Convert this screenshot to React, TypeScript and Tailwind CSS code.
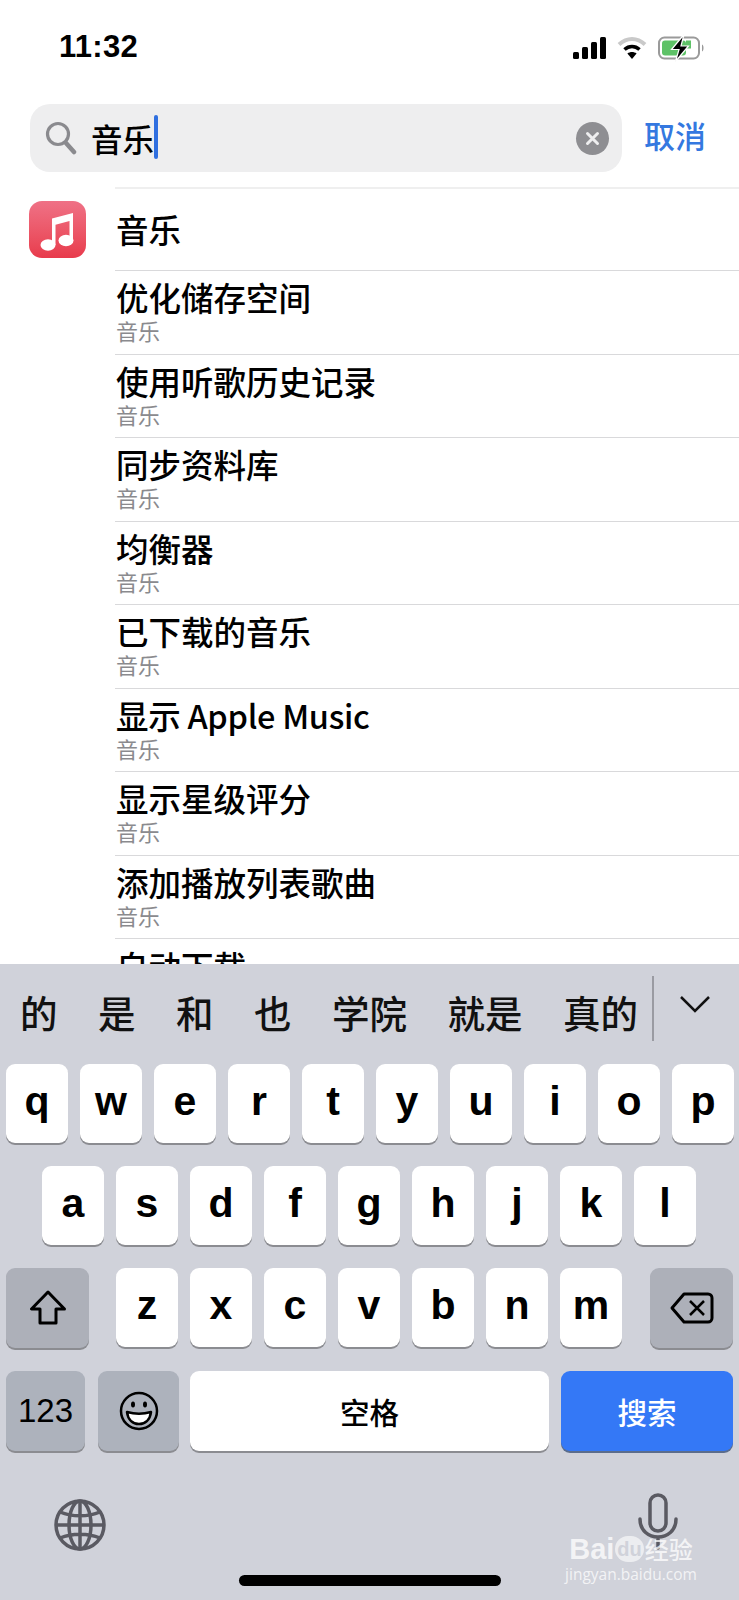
const cjk = "font-['Noto_Sans_CJK_SC','Noto_Sans',sans-serif]"

const rows = [
  "优化储存空间",
  "使用听歌历史记录",
  "同步资料库",
  "均衡器",
  "已下载的音乐",
  "显示 Apple Music",
  "显示星级评分",
  "添加播放列表歌曲",
]

const candidates = ["的", "是", "和", "也", "学院", "就是", "真的"]

function StatusBar() {
  return (
    <div className="flex h-[104px] items-start justify-between pl-[59px] pr-[34px] pt-[28px]">
      <span className="font-['Liberation_Sans',sans-serif] text-[31px] font-bold leading-[38px] tracking-[0.3px] text-black">11:32</span>
      <div className="mt-[6px] flex items-center gap-[11px]">
        <svg width="33" height="24" viewBox="0 0 33 24">
          <rect x="0" y="16" width="6" height="7" rx="1.5" fill="#000" />
          <rect x="9" y="11" width="6" height="12" rx="1.5" fill="#000" />
          <rect x="18" y="6" width="6" height="17" rx="1.5" fill="#000" />
          <rect x="27" y="1" width="6" height="22" rx="1.5" fill="#000" />
        </svg>
        <svg width="30" height="24" viewBox="0 0 30 24" fill="none">
          <path d="M2 8.500C10 1 20 1 28 8.500" stroke="#c9c9c9" strokeWidth="4" />
          <path d="M7.500 13.500C12 9.500 18 9.500 22.500 13.500" stroke="#000" strokeWidth="3.600" />
          <path d="M15 23l-4.600-5.400c2.700-2 6.500-2 9.200 0z" fill="#000" />
        </svg>
        <svg width="47" height="28" viewBox="0 0 47 28" fill="none">
          <rect x="1" y="3.500" width="40" height="21" rx="5.500" stroke="#9a9a9a" strokeWidth="2" />
          <rect x="4" y="6.500" width="24" height="15" rx="3" fill="#5ec267" />
          <rect x="28" y="6.500" width="5" height="8" fill="#5ec267" />
          <path d="M44 10.500c2 .6 2 6.400 0 7z" fill="#9a9a9a" />
          <path d="M26 0.500L13.500 15.500h7.500L17.500 27.500l13-15.500h-7.500z" fill="#000" stroke="#fff" strokeWidth="1.200" />
        </svg>
      </div>
    </div>
  )
}

function SearchBar() {
  return (
    <div className="flex items-center pl-[30px]">
      <div className="flex h-[68px] w-[592px] items-center rounded-[20px] bg-[#eeeeef] pl-[15px] pr-[13px]">
        <svg width="32" height="34" viewBox="0 0 32 34" fill="none">
          <circle cx="13" cy="13" r="10.500" stroke="#8a8a8e" strokeWidth="3.200" />
          <path d="M21 22l8 9" stroke="#8a8a8e" strokeWidth="4.500" strokeLinecap="round" />
        </svg>
        <span className={`${cjk} ml-[14px] text-[31.500px] font-medium leading-[44px] text-black`}>音乐</span>
        <span className="mb-[2px] h-[44px] w-[3.500px] rounded-full bg-[#2f6fe0]" />
        <span className="ml-auto flex h-[33px] w-[33px] items-center justify-center rounded-full bg-[#8e8e92]">
          <svg width="15" height="15" viewBox="0 0 15 15" fill="none">
            <path d="M2.500 2.500l10 10M12.500 2.500l-10 10" stroke="#eeeeef" strokeWidth="3" strokeLinecap="round" />
          </svg>
        </span>
      </div>
      <span className={`${cjk} mb-[6px] ml-[22px] text-[31px] font-medium leading-[44px] text-[#3478e0]`}>取消</span>
    </div>
  )
}

function MusicIcon() {
  return (
    <div className="flex h-[57px] w-[57px] items-center justify-center rounded-[13px] bg-gradient-to-b from-[#ef7186] to-[#e83a4c]">
      <svg width="36" height="42" viewBox="0 0 36 42" fill="#fff">
        <path d="M12 9.500L33 4v27h-3.500V12L15.500 15.700V36H12z" />
        <ellipse cx="8" cy="36" rx="7.500" ry="5.800" />
        <ellipse cx="26" cy="31.500" rx="7.500" ry="5.800" />
      </svg>
    </div>
  )
}

function ResultList() {
  return (
    <div className="mt-[15px] min-h-0 flex-1 overflow-hidden">
      <div className="ml-[115px] h-[2px] bg-[#efefef]" />
      <div className="relative h-[81px] pl-[116px]">
        <div className="absolute left-[29px] top-[12px]">
          <MusicIcon />
        </div>
        <p className={`${cjk} pt-[19px] text-[32.500px] font-medium leading-[42px] text-black`}>音乐</p>
      </div>
      {rows.map((title) => (
        <div key={title} className="ml-[115px] h-[83.500px] border-t border-[#d9d9db] pl-[1px]">
          <p className={`${cjk} whitespace-nowrap pt-[7px] text-[32.500px] font-medium leading-[38px] text-black ${title.includes("Apple") ? "tracking-[-0.3px]" : ""}`}>{title}</p>
          <p className={`${cjk} text-[22px] leading-[28px] text-[#8a8a8e]`}>音乐</p>
        </div>
      ))}
      <div className="ml-[115px] border-t border-[#d9d9db] pl-[1px]">
        <p className={`${cjk} whitespace-nowrap pt-[8px] text-[32.500px] font-medium leading-[38px] text-black`}>自动下载</p>
      </div>
    </div>
  )
}

function LetterKey({ label }: { label: string }) {
  return (
    <div className="flex h-[79px] w-[62px] items-center justify-center rounded-[9px] bg-white pb-[4px] font-['Liberation_Sans',sans-serif] text-[41px] font-bold text-black shadow-[0_2px_0_#8b8c91]">
      {label}
    </div>
  )
}

function Keyboard() {
  return (
    <div className="relative flex h-[636px] flex-col bg-[#d0d2da]">
      <div className="flex h-[100px] items-start pl-[20px]">
        <div className={`${cjk} flex w-[632px] gap-[40.500px] pt-[20px] text-[37.500px] font-medium leading-[56px] text-[#111]`}>
          {candidates.map((c) => (
            <span key={c}>{c}</span>
          ))}
        </div>
        <div className="mt-[12px] h-[65px] w-[2px] bg-[#9a9ba2]" />
        <svg className="ml-[25px] mt-[30px]" width="32" height="20" viewBox="0 0 32 20" fill="none">
          <path d="M2 3l14 14L30 3" stroke="#111" strokeWidth="2.500" />
        </svg>
      </div>

      <div className="flex flex-col gap-[23px]">
        <div className="flex gap-[12px] pl-[6px]">
          {"qwertyuiop".split("").map((k) => (
            <LetterKey key={k} label={k} />
          ))}
        </div>
        <div className="flex gap-[12px] pl-[42px]">
          {"asdfghjkl".split("").map((k) => (
            <LetterKey key={k} label={k} />
          ))}
        </div>
        <div className="flex pl-[6px]">
          <div className="flex h-[80px] w-[83px] items-center justify-center rounded-[9px] bg-[#adb0b9] shadow-[0_2px_0_#8b8c91]">
            <svg width="38" height="36" viewBox="0 0 38 36" fill="none">
              <path d="M19 2L2.500 19H11v14h16V19h8.500z" stroke="#000" strokeWidth="3" strokeLinejoin="round" />
            </svg>
          </div>
          <div className="ml-[27px] flex gap-[12px]">
            {"zxcvbnm".split("").map((k) => (
              <LetterKey key={k} label={k} />
            ))}
          </div>
          <div className="ml-[28px] flex h-[80px] w-[83px] items-center justify-center rounded-[9px] bg-[#adb0b9] shadow-[0_2px_0_#8b8c91]">
            <svg width="44" height="32" viewBox="0 0 44 32" fill="none">
              <path d="M14 2h24a4 4 0 0 1 4 4v20a4 4 0 0 1-4 4H14L2 16z" stroke="#000" strokeWidth="3" strokeLinejoin="round" />
              <path d="M20 9l14 14M34 9L20 23" stroke="#000" strokeWidth="2.500" />
            </svg>
          </div>
        </div>
        <div className="flex pl-[6px]">
          <div className="flex h-[80px] w-[79px] items-center justify-center rounded-[9px] bg-[#adb2bc] font-['Liberation_Sans',sans-serif] text-[33px] text-black shadow-[0_2px_0_#8b8c91]">
            123
          </div>
          <div className="ml-[13px] flex h-[80px] w-[81px] items-center justify-center rounded-[9px] bg-[#adb2bc] shadow-[0_2px_0_#8b8c91]">
            <svg width="40" height="40" viewBox="0 0 40 40" fill="none">
              <circle cx="20" cy="20" r="18" stroke="#000" strokeWidth="2.500" />
              <ellipse cx="14" cy="13.500" rx="2" ry="3" fill="#000" />
              <ellipse cx="26" cy="13.500" rx="2" ry="3" fill="#000" />
              <path d="M8 21c7 2 17 2 24 0-1 8-6 12-12 12S9 29 8 21z" fill="#fff" stroke="#000" strokeWidth="2.500" strokeLinejoin="round" />
            </svg>
          </div>
          <div className={`${cjk} ml-[11px] flex h-[80px] w-[359px] items-center justify-center rounded-[9px] bg-white text-[29.500px] font-medium text-black shadow-[0_2px_0_#8b8c91]`}>
            空格
          </div>
          <div className={`${cjk} ml-[12px] flex h-[80px] w-[172px] items-center justify-center rounded-[9px] bg-[#3478f6] text-[29.500px] font-medium text-white shadow-[0_2px_0_#5b6d8c]`}>
            搜索
          </div>
        </div>
      </div>

      <div className="mt-[44px] flex items-start justify-between pl-[54px] pr-[61px]">
        <svg className="mt-[4px]" width="52" height="52" viewBox="0 0 52 52" fill="none" stroke="#5a5a62" strokeWidth="3.500">
          <circle cx="26" cy="26" r="24" />
          <ellipse cx="26" cy="26" rx="11" ry="24" />
          <path d="M26 2v48M2 26h48M6 13c12 5 28 5 40 0M6 39c12-5 28-5 40 0" />
        </svg>
        <svg className="mt-[-2px]" width="40" height="58" viewBox="0 0 40 58" fill="none" stroke="#5a5a62" strokeWidth="3.500" strokeLinecap="round">
          <rect x="12" y="2" width="16" height="36" rx="8" />
          <path d="M2 26c0 24 36 24 36 0M20 45v10" />
        </svg>
      </div>

      <div className="absolute bottom-[14px] left-[239px] h-[11px] w-[262px] rounded-full bg-black" />

      <div className="absolute bottom-[16px] left-[564px] flex w-[134px] flex-col items-center text-white/75">
        <div className="flex items-center font-['Liberation_Sans',sans-serif] text-[29px] font-bold leading-[30px]">
          Bai
          <span className="mx-[1px] rounded-full bg-white/60 px-[2px] text-[20px] leading-[26px] text-[#d0d2da]">du</span>
          <span className={`${cjk} text-[24px] font-medium`}>经验</span>
        </div>
        <span className="font-['Open_Sans',sans-serif] text-[15.500px] leading-[20px]">jingyan.baidu.com</span>
      </div>
    </div>
  )
}

export default function App() {
  return (
    <div className="flex h-[1600px] w-[739px] flex-col overflow-hidden bg-white">
      <StatusBar />
      <SearchBar />
      <ResultList />
      <Keyboard />
    </div>
  )
}
